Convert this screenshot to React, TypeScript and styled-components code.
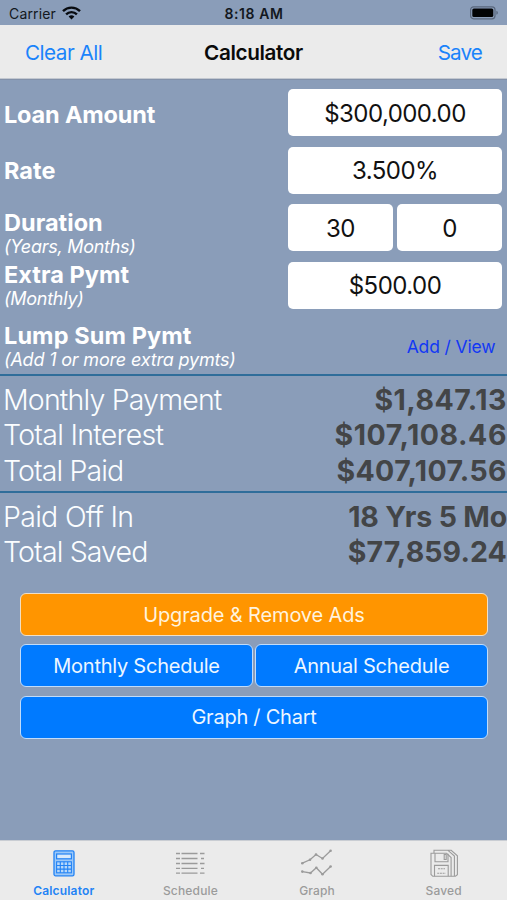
import React from 'react';
import styled, { createGlobalStyle } from 'styled-components';

const GlobalStyle = createGlobalStyle`
  * { box-sizing: border-box; }
  body { margin: 0; background: #8a9db9; }
  button, input { font: inherit; }
`;

const Screen = styled.div`
  width: 507px;
  height: 900px;
  display: flex;
  flex-direction: column;
  overflow: hidden;
  background: #8a9db9;
  font-family: Inter, "Liberation Sans", sans-serif;
`;

const StatusBar = styled.div`
  height: 25px;
  flex: none;
  display: grid;
  grid-template-columns: 1fr auto 1fr;
  align-items: center;
  padding: 2px 8px 0 9px;
  color: #131820;
`;

const Carrier = styled.div`
  display: flex;
  align-items: center;
  gap: 6px;
  font-size: 14px;
  letter-spacing: 0.15px;
`;

const WifiIcon = styled.svg`
  margin-top: -2px;
`;

const Clock = styled.div`
  font-size: 14px;
  font-weight: 600;
  letter-spacing: 0.6px;
`;

const BatteryIcon = styled.svg`
  justify-self: end;
  margin-top: -2px;
`;

const NavBar = styled.header`
  height: 54px;
  flex: none;
  display: grid;
  grid-template-columns: 1fr auto 1fr;
  align-items: center;
  padding: 2px 25px 0;
  background: #ebebeb;
  border-bottom: 1px solid #c3c8d0;
  box-shadow: 0 1px 0 #8391a9;
`;

const NavTitle = styled.h1`
  margin: 0;
  font-size: 20.7px;
  font-weight: 600;
  letter-spacing: -0.36px;
  color: #0a0a0a;
`;

const NavAction = styled.button<{ $end?: boolean; $tracking: number }>`
  justify-self: ${p => (p.$end ? 'end' : 'start')};
  padding: 0;
  border: 0;
  background: none;
  color: #1a83fb;
  font-size: 20.7px;
  letter-spacing: ${p => p.$tracking}px;
`;

const Form = styled.section`
  height: 295px;
  flex: none;
  display: flex;
  flex-direction: column;
  gap: 10.5px;
  padding: 10px 5px 0 4px;
`;

const Field = styled.div`
  height: 47px;
  display: flex;
  justify-content: space-between;
  align-items: center;
`;

const FieldLabel = styled.label<{ $drop: number; $tracking?: number }>`
  padding-top: ${p => p.$drop}px;
  color: #fff;
  font-size: 23.5px;
  font-weight: 680;
  line-height: 24px;
  letter-spacing: ${p => p.$tracking ?? 0.03}px;
  white-space: nowrap;
`;

const Hint = styled.small<{ $tracking?: number }>`
  display: block;
  font-size: 18px;
  font-weight: 400;
  font-style: italic;
  letter-spacing: ${p => p.$tracking ?? -0.27}px;
`;

const Inputs = styled.div`
  width: 214px;
  display: flex;
  gap: 4px;
`;

const ValueBox = styled.div`
  flex: 1;
  height: 47px;
  display: flex;
  align-items: center;
  justify-content: center;
  padding-top: 1px;
  border-radius: 5px;
  background: #fff;
  color: #111;
  font-size: 24px;
  letter-spacing: -0.54px;
`;

const LinkButton = styled.button`
  padding: 7px 6.5px 0 0;
  border: 0;
  background: none;
  color: #1238f4;
  font-size: 17.5px;
  letter-spacing: -0.13px;
`;

const Summary = styled.section<{ $height: number }>`
  height: ${p => p.$height}px;
  flex: none;
  padding: 6px 0 0 3px;
  border-top: 2px solid #2f6d9a;
`;

const SummaryRow = styled.div`
  display: flex;
  justify-content: space-between;
  font-size: 28.5px;
  line-height: 35.3px;
  white-space: nowrap;
`;

const SummaryLabel = styled.span<{ $tracking: number }>`
  color: #fbfdff;
  font-weight: 350;
  letter-spacing: ${p => p.$tracking}px;
`;

const SummaryValue = styled.span<{ $tracking: number }>`
  color: #434547;
  font-weight: 650;
  letter-spacing: ${p => p.$tracking}px;
`;

const Actions = styled.section`
  flex: 1;
  display: grid;
  grid-template-columns: 1fr 1fr;
  grid-auto-rows: 43px;
  gap: 8.3px 2px;
  align-content: start;
  padding: 10px 19px 0 20px;
`;

const ActionButton = styled.button<{ $wide?: boolean; $upgrade?: boolean }>`
  grid-column: ${p => (p.$wide ? 'span 2' : 'auto')};
  padding: 0;
  border: 1.5px solid ${p => (p.$upgrade ? '#f1dfc5' : '#c0dcfb')};
  border-radius: 6px;
  background: ${p => (p.$upgrade ? '#ff9500' : '#007aff')};
  color: ${p => (p.$upgrade ? '#fff3de' : '#edf6ff')};
  font-size: 20px;
  letter-spacing: ${p => (p.$upgrade ? -0.14 : -0.24)}px;
`;

const TabBar = styled.nav`
  height: 60px;
  flex: none;
  display: grid;
  grid-template-columns: repeat(4, 1fr);
  padding-left: 0.5px;
  background: #ebebeb;
  border-top: 1px solid #c9cdd3;
`;

const Tab = styled.a<{ $active?: boolean }>`
  display: flex;
  flex-direction: column;
  align-items: center;
  padding-top: 7px;
  color: ${p => (p.$active ? '#2383f5' : '#9b9b9b')};
  font-size: 12px;
  font-weight: ${p => (p.$active ? 600 : 500)};
  line-height: 16px;
  letter-spacing: 0.17px;
`;

const TabIcon = styled.svg`
  width: 32px;
  height: 30px;
  margin-bottom: 5px;
  fill: none;
  stroke: currentColor;
`;

const fields = [
  { label: 'Loan Amount', tracking: -0.17, drop: 4, values: ['$300,000.00'] },
  { label: 'Rate', drop: 1, values: ['3.500%'] },
  { label: 'Duration', hint: '(Years, Months)', drop: 14, values: ['30', '0'] },
  { label: 'Extra Pymt', hint: '(Monthly)', drop: 3, values: ['$500.00'] },
];

const totals = [
  { label: 'Monthly Payment', lt: -0.82, value: '$1,847.13', vt: 0.5 },
  { label: 'Total Interest', lt: -0.72, value: '$107,108.46', vt: 0.56 },
  { label: 'Total Paid', lt: -0.88, value: '$407,107.56', vt: 0.36 },
];

const payoff = [
  { label: 'Paid Off In', lt: -0.7, value: '18 Yrs 5 Mo', vt: -0.16 },
  { label: 'Total Saved', lt: -0.86, value: '$77,859.24', vt: 0.1 },
];

type Line = (typeof totals)[number];

function Lines({ rows }: { rows: Line[] }) {
  return (
    <>
      {rows.map(r => (
        <SummaryRow key={r.label}>
          <SummaryLabel $tracking={r.lt}>{r.label}</SummaryLabel>
          <SummaryValue $tracking={r.vt}>{r.value}</SummaryValue>
        </SummaryRow>
      ))}
    </>
  );
}

function CalculatorIcon() {
  return (
    <TabIcon viewBox="0 0 32 30">
      <rect x="6" y="2.8" width="20" height="25" rx="1.6" fill="#9bc8f8" strokeWidth="1.3" />
      <rect x="8.6" y="6" width="14.8" height="4.8" fill="#d9eafb" strokeWidth="1.2" />
      <rect x="8.6" y="13.8" width="14.8" height="11" fill="#b7d8fa" strokeWidth="1.1" />
      <path d="M12.3 13.8v11M16 13.8v11M19.7 13.8v11M8.6 17.5h14.8M8.6 21.1h14.8" strokeWidth="1.1" />
    </TabIcon>
  );
}

function ScheduleIcon() {
  return (
    <TabIcon viewBox="0 0 32 30">
      {[5.5, 10.5, 15.5, 20.3, 25.2].map((y, i) => (
        <path key={y} strokeWidth="1.3" d={`M2 ${y}h4M7.5 ${y}h16M${i % 2 ? 27 : 26} ${y}h${i % 2 ? 3 : 4.5}`} />
      ))}
    </TabIcon>
  );
}

function GraphIcon() {
  const upper = [[1.3, 15.2], [9, 11.8], [15, 6.5], [21.5, 10.5], [29.6, 2.8]];
  const lower = [[1.3, 23.6], [9.5, 25], [15.3, 19.7], [21.5, 26.3], [29.6, 18.5]];
  return (
    <TabIcon viewBox="0 0 32 30">
      {[upper, lower].map((pts, i) => (
        <g key={i}>
          <polyline points={pts.map(p => p.join(',')).join(' ')} strokeWidth="1.3" />
          {pts.map(([x, y]) => (
            <circle key={x} cx={x} cy={y} r="1.3" fill="currentColor" stroke="none" />
          ))}
        </g>
      ))}
    </TabIcon>
  );
}

function SavedIcon() {
  return (
    <TabIcon viewBox="0 0 32 30" strokeWidth="1.1">
      <path d="M3 5.2h15.5l4.6 4.4v18.7H4.8L3 26.5z" />
      <path d="M6 5V2.3h17.2l6.2 5.5v18.9l-2 1.6h-4.2M20 2.3l6.4 5.8v20" />
      <path d="M7 5.2v8.6h13V5.8M16.2 6.5h2v5h-2zM6.5 28.2V17.4h13.7v10.8" />
      <path d="M10 20.8h7M9.2 25.2h8.4" strokeDasharray="2 .7" />
    </TabIcon>
  );
}

export default function App() {
  return (
    <Screen>
      <GlobalStyle />
      <StatusBar>
        <Carrier>
          Carrier
          <WifiIcon width="19" height="14" viewBox="0 0 19 14" fill="none" stroke="#080b10" strokeWidth="2.4">
            <path d="M1 5.1a12.2 12.2 0 0 1 17 0" />
            <path d="M4.1 8.3a7.7 7.7 0 0 1 10.8 0" />
            <path d="M6.6 10.6a4.2 4.2 0 0 1 5.8 0L9.5 13.5z" fill="#080b10" stroke="none" />
          </WifiIcon>
        </Carrier>
        <Clock>8:18 AM</Clock>
        <BatteryIcon width="30" height="14" viewBox="0 0 30 14">
          <rect x="1.6" y="0.8" width="24.4" height="12" rx="3" fill="none" stroke="#59677c" strokeWidth="1.2" />
          <rect x="3.3" y="2.5" width="21" height="8.6" rx="1.6" fill="#020304" />
          <path d="M27.4 4.8c2 .8 2 3.2 0 4z" fill="#59677c" />
        </BatteryIcon>
      </StatusBar>

      <NavBar>
        <NavAction $tracking={-0.52}>Clear All</NavAction>
        <NavTitle>Calculator</NavTitle>
        <NavAction $end $tracking={-0.9}>Save</NavAction>
      </NavBar>

      <Form>
        {fields.map(f => (
          <Field key={f.label}>
            <FieldLabel $drop={f.drop} $tracking={f.tracking}>
              {f.label}
              {f.hint && <Hint>{f.hint}</Hint>}
            </FieldLabel>
            <Inputs>
              {f.values.map(v => (
                <ValueBox key={v}>{v}</ValueBox>
              ))}
            </Inputs>
          </Field>
        ))}
        <Field>
          <FieldLabel $drop={10} $tracking={0.1}>
            Lump Sum Pymt
            <Hint $tracking={-0.18}>(Add 1 or more extra pymts)</Hint>
          </FieldLabel>
          <LinkButton>Add / View</LinkButton>
        </Field>
      </Form>

      <Summary $height={117}>
        <Lines rows={totals} />
      </Summary>
      <Summary $height={92}>
        <Lines rows={payoff} />
      </Summary>

      <Actions>
        <ActionButton $wide $upgrade>Upgrade &amp; Remove Ads</ActionButton>
        <ActionButton>Monthly Schedule</ActionButton>
        <ActionButton>Annual Schedule</ActionButton>
        <ActionButton $wide>Graph / Chart</ActionButton>
      </Actions>

      <TabBar>
        <Tab $active><CalculatorIcon />Calculator</Tab>
        <Tab><ScheduleIcon />Schedule</Tab>
        <Tab><GraphIcon />Graph</Tab>
        <Tab><SavedIcon />Saved</Tab>
      </TabBar>
    </Screen>
  );
}
